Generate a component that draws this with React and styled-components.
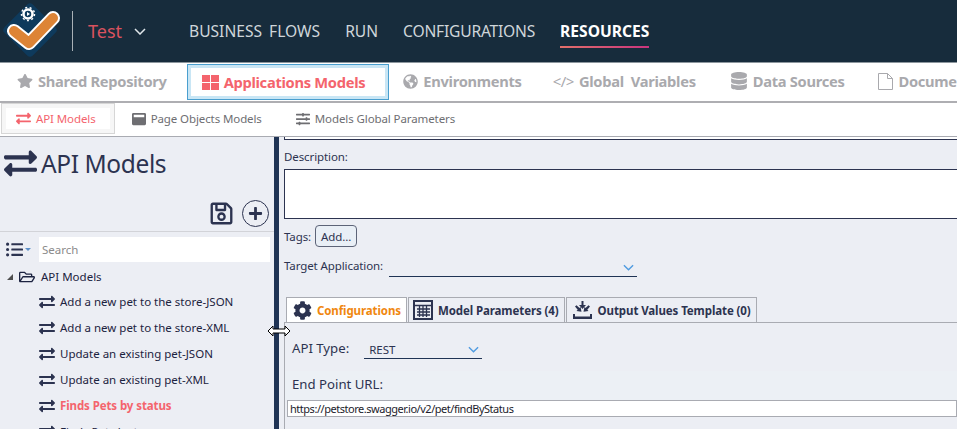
import React from 'react';
import styled, { createGlobalStyle } from 'styled-components';
import {
  FaStar, FaGlobeAmericas, FaDatabase, FaExchangeAlt, FaWindowMaximize,
  FaSlidersH, FaRegSave, FaPlus, FaListUl, FaRegFolderOpen, FaCog,
} from 'react-icons/fa';

const GlobalStyle = createGlobalStyle`
  html, body { margin: 0; padding: 0; height: 100%; overflow: hidden; }
  body { font-family: "Noto Sans", "Open Sans", sans-serif; background: #eceef4; }
`;

const Page = styled.div`
  width: 957px;
  height: 429px;
  display: flex;
  flex-direction: column;
  overflow: hidden;
  position: relative;
`;

const Header = styled.header`
  height: 62px;
  flex: none;
  background: #172c3c;
  display: flex;
  align-items: center;
  border-bottom: 1px solid #8d979e;
`;

const LogoWrap = styled.div`
  width: 72px;
  height: 62px;
  flex: none;
  display: flex;
  align-items: center;
`;

const Divider = styled.div`
  width: 1px;
  height: 40px;
  background: #a9b1b6;
`;

const Solution = styled.div`
  width: 101px;
  flex: none;
  display: flex;
  align-items: center;
  padding-left: 15px;
  gap: 12px;
  color: #d9525f;
  font-size: 18px;
  height: 40px;
`;

const Nav = styled.nav`
  display: flex;
  gap: 25px;
`;

const NavItem = styled.div`
  color: ${(p) => (p.$active ? '#ffffff' : '#cfd6da')};
  font-size: 15.6px;
  font-weight: ${(p) => (p.$active ? 700 : 400)};
  letter-spacing: ${(p) => (p.$tight ? '-0.2px' : '0')};
  word-spacing: ${(p) => p.$wordGap || 0}px;
  height: 32px;
  line-height: 34px;
  border-bottom: 2px solid transparent;
  border-image: ${(p) => (p.$active ? 'linear-gradient(90deg, #e2706a, #c9347e) 1' : 'none')};
`;

const MainTabs = styled.div`
  height: 36px;
  padding: 0 0 2px 17px;
  flex: none;
  background: #fff;
  border-bottom: 2px solid #aeaeb2;
  display: flex;
  align-items: center;
  white-space: nowrap;
  overflow: hidden;
`;

const MainTab = styled.div`
  display: flex;
  align-items: center;
  gap: 5px;
  flex: none;
  font-size: 14.7px;
  font-weight: 700;
  letter-spacing: -0.3px;
  color: ${(p) => (p.$active ? '#f4646d' : '#a9a9ad')};
  margin-right: ${(p) => p.$gap}px;
  ${(p) => p.$active && `
    height: 36px;
    margin-top: 2px;
    box-sizing: border-box;
    padding: 0 23px 0 14px;
    background: #fff;
    border: 1px solid #4a9fcf;
    box-shadow: inset 0 0 0 3px #c9e6f5;
  `}
`;

const AppsIcon = styled.svg`
  width: 17px;
  height: 15px;
  fill: #f4646d;
`;

const CodeGlyph = styled.span`
  font-weight: 400;
  font-size: 15px;
  letter-spacing: -0.5px;
`;

const SubTabs = styled.div`
  height: 31px;
  padding: 0 0 2px 1px;
  flex: none;
  background: #fff;
  border-bottom: 1px solid #a9abb2;
  display: flex;
  align-items: center;
`;

const SubTab = styled.div`
  height: 31px;
  box-sizing: border-box;
  display: flex;
  align-items: center;
  gap: 5px;
  font-size: 11.5px;
  letter-spacing: -0.1px;
  color: ${(p) => (p.$active ? '#f4646d' : '#6e6e72')};
  padding: ${(p) => (p.$active ? '0 18px 0 14px' : '0 17px')};
  ${(p) => p.$active && `
    border: 1px solid #d6d6d6;
    box-shadow: inset 0 0 0 4px #f6f6f6;
  `}
`;

const Body = styled.div`
  flex: 1;
  min-height: 0;
  display: flex;
`;

const Left = styled.aside`
  width: 274px;
  flex: none;
  color: #2c3350;
  overflow: hidden;
`;

const TitleRow = styled.div`
  height: 49px;
  display: flex;
  align-items: center;
  gap: 4px;
  padding: 4px 0 0 4px;
  box-sizing: border-box;
  font-size: 24.5px;
  letter-spacing: -0.4px;
`;

const ActionRow = styled.div`
  height: 46px;
  display: flex;
  align-items: center;
  justify-content: flex-end;
  gap: 8px;
  padding: 10px 5px 0 0;
  box-sizing: border-box;
  border-bottom: 1px solid #d2d3d8;
`;

const RoundBtn = styled.div`
  width: 27px;
  height: 27px;
  box-sizing: border-box;
  border: 1px solid #2c3350;
  border-radius: 50%;
  display: flex;
  align-items: center;
  justify-content: center;
`;

const SearchRow = styled.div`
  display: flex;
  align-items: center;
  height: 25px;
  margin-top: 5px;
  padding: 0 4px 0 6px;
`;

const ListMenu = styled.div`
  width: 33px;
  flex: none;
  display: flex;
  align-items: center;
  gap: 2px;
`;

const Caret = styled.span`
  width: 0;
  height: 0;
  border-left: 3px solid transparent;
  border-right: 3px solid transparent;
  border-top: 3px solid #5d8fc7;
`;

const Search = styled.div`
  flex: 1;
  height: 25px;
  line-height: 25px;
  background: #fff;
  color: #8b8b8b;
  font-size: 11.5px;
  padding-left: 3px;
`;

const RootNode = styled.div`
  height: 25px;
  margin-top: 2px;
  display: flex;
  align-items: center;
  padding-left: 7px;
  gap: 6px;
  font-size: 11.5px;
  color: #1c2340;
`;

const Triangle = styled.span`
  width: 0;
  height: 0;
  border-left: 6px solid transparent;
  border-bottom: 6px solid #4e4e4e;
`;

const Node = styled.div`
  height: 26px;
  box-sizing: border-box;
  padding: 0 0 1px 39px;
  display: flex;
  align-items: center;
  gap: 5px;
  font-size: 11.5px;
  white-space: nowrap;
  letter-spacing: ${(p) => (p.$active ? '-0.1px' : '0')};
  color: ${(p) => (p.$active ? '#f4646d' : '#1c2340')};
  font-weight: ${(p) => (p.$active ? 700 : 400)};
  svg { color: #2c3350; flex: none; }
`;

const Splitter = styled.div`
  width: 5px;
  flex: none;
  background: #1f3354;
`;

const Right = styled.section`
  flex: 1;
  min-width: 0;
  overflow: hidden;
  padding-left: 5px;
  color: #2c3350;
  font-size: 11.5px;
  letter-spacing: -0.1px;
`;

const CutField = styled.div`
  height: 2px;
  background: #fff;
  border-left: 1px solid #2c3350;
  border-bottom: 1px solid #2c3350;
`;

const Label = styled.div`
  height: 16px;
  line-height: 16px;
  margin-top: 9px;
`;

const TextArea = styled.div`
  height: 48px;
  margin-top: 4px;
  margin-right: -2px;
  background: #fff;
  border: 1px solid #2c3350;
`;

const TagRow = styled.div`
  display: flex;
  align-items: center;
  gap: 4px;
  margin-top: 6px;
`;

const AddBtn = styled.div`
  width: 42px;
  height: 22px;
  box-sizing: border-box;
  border: 1px solid #5d6478;
  border-radius: 4px;
  background: #e9eff6;
  display: flex;
  align-items: center;
  justify-content: center;
`;

const TargetRow = styled.div`
  display: flex;
  align-items: flex-start;
  margin-top: 11px;
  height: 19px;
`;

const Combo = styled.div`
  width: ${(p) => p.$width}px;
  margin-left: ${(p) => p.$left}px;
  height: 19px;
  flex: none;
  box-sizing: border-box;
  border-bottom: 1px solid #1f3354;
  display: flex;
  align-items: center;
  justify-content: space-between;
  padding: 0 3px 0 5px;
  font-size: 11.5px;
`;

const Chevron = styled.svg`
  width: ${(p) => p.$size}px;
  height: ${(p) => Math.round(p.$size * 0.6)}px;
  fill: none;
  stroke: ${(p) => p.$color};
  stroke-width: 1.5;
`;

const TabStrip = styled.div`
  display: flex;
  align-items: flex-end;
  height: 25px;
  margin-top: 20px;
  margin-left: 2px;
  gap: 1px;
`;

const Tab = styled.div`
  height: 25px;
  box-sizing: border-box;
  display: flex;
  align-items: center;
  gap: 5px;
  padding: 0 5px 0 ${(p) => p.$lead}px;
  font-weight: 700;
  font-size: 11.5px;
  letter-spacing: -0.1px;
  white-space: nowrap;
  border: 1px solid #a9abb2;
  border-bottom: none;
  background: ${(p) => (p.$active ? '#fff' : '#eceef4')};
  color: ${(p) => (p.$active ? '#f0870f' : '#2c3350')};
  svg { color: #2c3350; flex: none; }
`;

const Pane = styled.div`
  border-top: 1px solid #a9abb2;
  border-left: 1px solid #a9abb2;
  height: 110px;
  padding-top: 17px;
  box-sizing: border-box;
  font-size: 13.2px;
  letter-spacing: 0;
`;

const ApiRow = styled.div`
  display: flex;
  align-items: flex-start;
  padding-left: 7px;
  height: 20px;
  line-height: 17px;
`;

const UrlLabel = styled.div`
  margin-top: 11px;
  padding-left: 7px;
  height: 29px;
  line-height: 26px;
  background: #ecf0f5;
`;

const UrlInput = styled.div`
  height: 17px;
  line-height: 15px;
  margin-left: 2px;
  box-sizing: border-box;
  background: #fff;
  border: 1px solid #a9abb2;
  padding-left: 2px;
  color: #1c1c2c;
  font-size: 11px;
  letter-spacing: -0.47px;
`;

const ResizeCursor = styled.svg`
  position: absolute;
  left: 267px;
  top: 325px;
`;

function Logo() {
  return (
    <svg width="62" height="58" viewBox="0 0 62 58">
      <rect x="10" y="8" width="40" height="40" rx="4" transform="rotate(45 30 28)" fill="#0e3a5c" />
      <path d="M14 29 L29 41 L53 16" fill="none" stroke="#fff" strokeWidth="14" strokeLinecap="round" strokeLinejoin="round" />
      <path d="M14 29 L29 41 L53 16" fill="none" stroke="#dd8436" strokeWidth="10" strokeLinecap="round" strokeLinejoin="round" />
      <circle cx="28" cy="12" r="4.5" fill="#0e3a5c" stroke="#fff" strokeWidth="2.500" />
      <circle cx="28" cy="12" r="6.500" fill="none" stroke="#fff" strokeWidth="1.500" strokeDasharray="2 2.500" />
      <path d="M27 10l3 2-3 2z" fill="#fff" />
    </svg>
  );
}

function ChevronIcon({ size, color }) {
  return (
    <Chevron $size={size} $color={color} viewBox="0 0 12 7">
      <path d="M1 1l5 5 5-5" />
    </Chevron>
  );
}

function DocIcon() {
  return (
    <svg width="15" height="17" viewBox="0 0 15 17" fill="#fff" stroke="#a9a9ad">
      <path d="M.5.5h9l5 5v11H.5z" />
      <path d="M9.500.5v5h5" fill="none" />
    </svg>
  );
}

function OutputIcon() {
  return (
    <svg width="21" height="20" viewBox="0 0 21 20" fill="#2c3350">
      <path d="M9.500 1h2v4h2.500l-3.500 4-3.500-4h2.500z" />
      <path d="M3 6.500l1.500-1.200 3 2.700 1-1.200 1 5-5-.8 1.200-1.200z" />
      <path d="M18 6.500l-1.500-1.200-3 2.700-1-1.200-1 5 5-.8-1.200-1.200z" />
      <path d="M1 14h2v2.500h15V14h2v5H1z" />
    </svg>
  );
}

function GridIcon() {
  return (
    <svg width="20" height="20" viewBox="0 0 20 20" fill="none" stroke="#2c3350">
      <rect x="1" y="1" width="18" height="18" strokeWidth="2" />
      <path d="M1 5.500h18M4 9h13M4 12h13M4 15h13M6.500 6v11M10 6v11M13.500 6v11" strokeWidth="1.300" />
    </svg>
  );
}

const apiNodes = [
  { name: 'Add a new pet to the store-JSON' },
  { name: 'Add a new pet to the store-XML' },
  { name: 'Update an existing pet-JSON' },
  { name: 'Update an existing pet-XML' },
  { name: 'Finds Pets by status', active: true },
  { name: 'Finds Pets by tags' },
];

export default function App() {
  return (
    <Page>
      <GlobalStyle />
      <Header>
        <LogoWrap><Logo /></LogoWrap>
        <Divider />
        <Solution>Test <ChevronIcon size={12} color="#dfe6ea" /></Solution>
        <Nav>
          <NavItem $wordGap={3}>BUSINESS FLOWS</NavItem>
          <NavItem>RUN</NavItem>
          <NavItem $tight>CONFIGURATIONS</NavItem>
          <NavItem $active>RESOURCES</NavItem>
        </Nav>
      </Header>

      <MainTabs>
        <MainTab $gap={20}><FaStar size={16} />Shared Repository</MainTab>
        <MainTab $active $gap={14}>
          <AppsIcon viewBox="0 0 17 15">
            <rect width="8" height="7" />
            <rect x="9" width="8" height="7" />
            <rect y="8" width="8" height="7" />
            <rect x="9" y="8" width="8" height="7" />
          </AppsIcon>
          Applications Models
        </MainTab>
        <MainTab $gap={31}><FaGlobeAmericas size={15} />Environments</MainTab>
        <MainTab $gap={34}><CodeGlyph>&lt;/&gt;</CodeGlyph>Global&nbsp; Variables</MainTab>
        <MainTab $gap={34}><FaDatabase size={18} />Data Sources</MainTab>
        <MainTab $gap={0}><DocIcon />Documents</MainTab>
      </MainTabs>

      <SubTabs>
        <SubTab $active><FaExchangeAlt size={15} />API Models</SubTab>
        <SubTab><FaWindowMaximize size={14} />Page Objects Models</SubTab>
        <SubTab><FaSlidersH size={14} />Models Global Parameters</SubTab>
      </SubTabs>

      <Body>
        <Left>
          <TitleRow><FaExchangeAlt size={33} />API Models</TitleRow>
          <ActionRow>
            <FaRegSave size={25} />
            <RoundBtn><FaPlus size={15} /></RoundBtn>
          </ActionRow>
          <SearchRow>
            <ListMenu><FaListUl size={17} /><Caret /></ListMenu>
            <Search>Search</Search>
          </SearchRow>
          <RootNode>
            <Triangle />
            <FaRegFolderOpen size={16} />
            API Models
          </RootNode>
          {apiNodes.map((n) => (
            <Node key={n.name} $active={n.active}>
              <FaExchangeAlt size={16} />
              {n.name}
            </Node>
          ))}
        </Left>
        <Splitter />
        <Right>
          <CutField />
          <Label>Description:</Label>
          <TextArea />
          <TagRow>Tags: <AddBtn>Add...</AddBtn></TagRow>
          <TargetRow>
            Target Application:
            <Combo $width={248} $left={6}><span /><ChevronIcon size={11} color="#4f9be0" /></Combo>
          </TargetRow>
          <TabStrip>
            <Tab $active $lead={6}><FaCog size={19} />Configurations</Tab>
            <Tab $lead={4}><GridIcon />Model Parameters (4)</Tab>
            <Tab $lead={5}><OutputIcon />Output Values Template (0)</Tab>
          </TabStrip>
          <Pane>
            <ApiRow>
              API Type:
              <Combo $width={118} $left={15}>REST<ChevronIcon size={11} color="#4f9be0" /></Combo>
            </ApiRow>
            <UrlLabel>End Point URL:</UrlLabel>
            <UrlInput>https://petstore.swagger.io/v2/pet/findByStatus</UrlInput>
          </Pane>
        </Right>
      </Body>

      <ResizeCursor width="24" height="12" viewBox="0 0 24 12">
        <path d="M1 6l5-5v3h12V1l5 5-5 5V8H6v3z" fill="#fff" stroke="#000" />
      </ResizeCursor>
    </Page>
  );
}
